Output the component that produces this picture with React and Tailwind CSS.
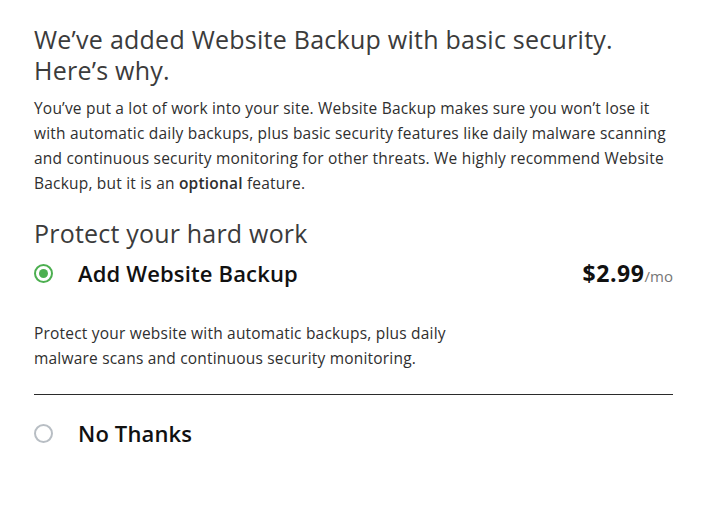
import React, { useState } from 'react';

const Radio = ({ checked }) => (
    checked ? (
        <span className="flex items-center justify-center w-[19px] h-[19px] rounded-full border-2 border-[#4caf50] shrink-0">
            <span className="w-[9px] h-[9px] rounded-full bg-[#4caf50]" />
        </span>
    ) : (
        <span className="w-[19px] h-[19px] rounded-full border-2 border-[#b8bec4] shrink-0" />
    )
);

const App = () => {
    const [choice, setChoice] = useState('add');

    return (
        <div className="w-[722px] h-[508px] bg-white font-['Open_Sans',sans-serif] text-[#2b2b2b]">
            <div className="pl-[34px] pr-[49px] pt-[24px]">
                <h1 className="text-[25px] leading-[31px] tracking-[0.25px] text-[#3b3b3b]">
                    We’ve added Website Backup with basic security.<br />Here’s why.
                </h1>
                <p className="mt-[10px] text-[15.5px] leading-[25px] tracking-[0.2px] text-[#2f2f2f] whitespace-nowrap">
                    You’ve put a lot of work into your site. Website Backup makes sure you won’t lose it<br />
                    with automatic daily backups, plus basic security features like daily malware scanning<br />
                    and continuous security monitoring for other threats. We highly recommend Website<br />
                    Backup, but it is an <span className="font-semibold">optional</span> feature.
                </p>

                <h2 className="mt-[22px] text-[25px] leading-[30px] tracking-[0.2px] text-[#3b3b3b]">Protect your hard work</h2>

                <button onClick={() => setChoice('add')} className="mt-[8px] w-full flex items-center text-left">
                    <Radio checked={choice === 'add'} />
                    <span className="ml-[25px] text-[22px] font-semibold tracking-[0.15px] text-[#111]">Add Website Backup</span>
                    <span className="ml-auto flex items-baseline">
                        <span className="text-[23px] font-bold tracking-[0.6px] text-[#111]">$2.99</span>
                        <span className="text-[15px] text-[#767676]">/mo</span>
                    </span>
                </button>

                <p className="mt-[30px] text-[15.5px] leading-[25px] tracking-[0.2px] text-[#2f2f2f]">
                    Protect your website with automatic backups, plus daily<br />malware scans and continuous security monitoring.
                </p>

                <div className="mt-[23px] border-t border-[#2b2b2b]" />

                <button onClick={() => setChoice('none')} className="mt-[22px] flex items-center text-left">
                    <Radio checked={choice === 'none'} />
                    <span className="ml-[25px] text-[22px] font-semibold tracking-[0.15px] text-[#111]">No Thanks</span>
                </button>
            </div>
        </div>
    );
};

export default App;
